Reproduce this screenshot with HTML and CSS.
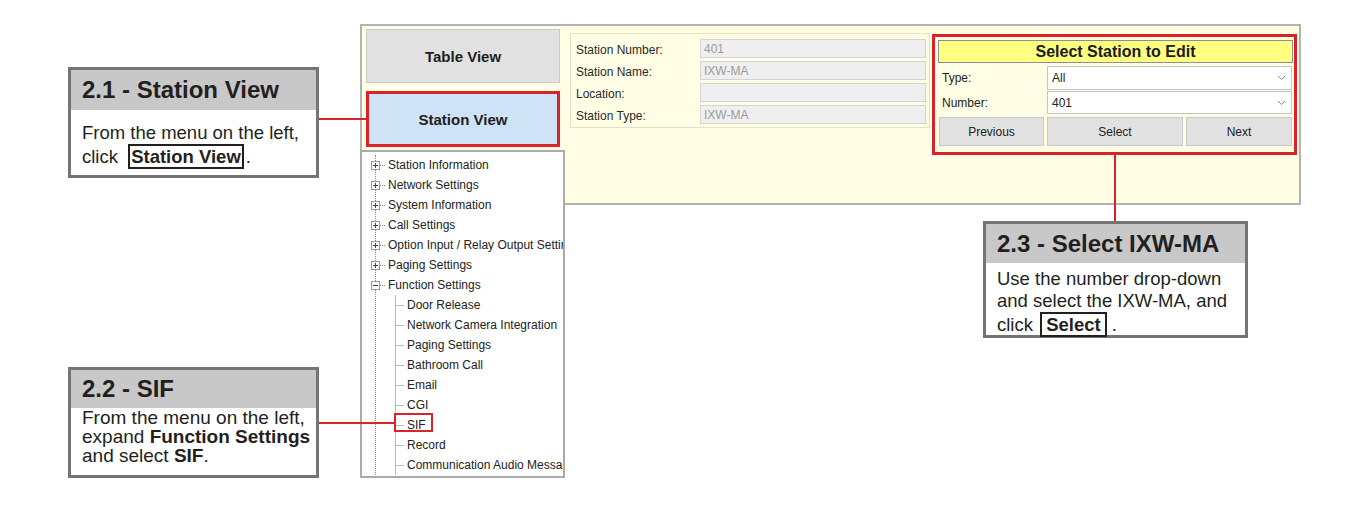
FILE: index.html
```html
<!DOCTYPE html>
<html lang="en">
<head>
<meta charset="utf-8">
<title>Station View - SIF</title>
<link rel="stylesheet" href="styles.css">
</head>
<body>
<div class="canvas">
  <div class="screen">
    <div class="leftcol">
      <div class="btnarea">
        <div class="viewbtn">Table View</div>
        <div class="viewbtn active">Station View</div>
      </div>
      <div class="tree">
        <ul class="tree-root">
          <li><div class="row"><svg class="exp" width="9" height="9" viewBox="0 0 9 9"><rect x="0.5" y="0.5" width="8" height="8" fill="#fff" stroke="#9a9a9a"/><path d="M2 4.5h5M4.5 2v5" stroke="#444"/></svg><span class="hdots"></span><span class="lbl">Station Information</span></div></li>
          <li><div class="row"><svg class="exp" width="9" height="9" viewBox="0 0 9 9"><rect x="0.5" y="0.5" width="8" height="8" fill="#fff" stroke="#9a9a9a"/><path d="M2 4.5h5M4.5 2v5" stroke="#444"/></svg><span class="hdots"></span><span class="lbl">Network Settings</span></div></li>
          <li><div class="row"><svg class="exp" width="9" height="9" viewBox="0 0 9 9"><rect x="0.5" y="0.5" width="8" height="8" fill="#fff" stroke="#9a9a9a"/><path d="M2 4.5h5M4.5 2v5" stroke="#444"/></svg><span class="hdots"></span><span class="lbl">System Information</span></div></li>
          <li><div class="row"><svg class="exp" width="9" height="9" viewBox="0 0 9 9"><rect x="0.5" y="0.5" width="8" height="8" fill="#fff" stroke="#9a9a9a"/><path d="M2 4.5h5M4.5 2v5" stroke="#444"/></svg><span class="hdots"></span><span class="lbl">Call Settings</span></div></li>
          <li><div class="row"><svg class="exp" width="9" height="9" viewBox="0 0 9 9"><rect x="0.5" y="0.5" width="8" height="8" fill="#fff" stroke="#9a9a9a"/><path d="M2 4.5h5M4.5 2v5" stroke="#444"/></svg><span class="hdots"></span><span class="lbl">Option Input / Relay Output Settings</span></div></li>
          <li><div class="row"><svg class="exp" width="9" height="9" viewBox="0 0 9 9"><rect x="0.5" y="0.5" width="8" height="8" fill="#fff" stroke="#9a9a9a"/><path d="M2 4.5h5M4.5 2v5" stroke="#444"/></svg><span class="hdots"></span><span class="lbl">Paging Settings</span></div></li>
          <li>
            <div class="row"><svg class="exp" width="9" height="9" viewBox="0 0 9 9"><rect x="0.5" y="0.5" width="8" height="8" fill="#fff" stroke="#9a9a9a"/><path d="M2 4.5h5" stroke="#444"/></svg><span class="hdots"></span><span class="lbl">Function Settings</span></div>
            <ul class="children">
              <li><div class="row"><span class="branch"></span><span class="lbl">Door Release</span></div></li>
              <li><div class="row"><span class="branch"></span><span class="lbl">Network Camera Integration</span></div></li>
              <li><div class="row"><span class="branch"></span><span class="lbl">Paging Settings</span></div></li>
              <li><div class="row"><span class="branch"></span><span class="lbl">Bathroom Call</span></div></li>
              <li><div class="row"><span class="branch"></span><span class="lbl">Email</span></div></li>
              <li><div class="row"><span class="branch"></span><span class="lbl">CGI</span></div></li>
              <li class="marked"><div class="row"><span class="branch"></span><span class="lbl">SIF</span></div><span class="mark"></span></li>
              <li><div class="row"><span class="branch"></span><span class="lbl">Record</span></div></li>
              <li><div class="row"><span class="branch"></span><span class="lbl">Communication Audio Messages</span></div></li>
            </ul>
          </li>
        </ul>
      </div>
    </div>

    <div class="panel">
      <div class="fields">
        <div class="flabel">Station Number:</div><div class="finput">401</div>
        <div class="flabel">Station Name:</div><div class="finput">IXW-MA</div>
        <div class="flabel">Location:</div><div class="finput"></div>
        <div class="flabel">Station Type:</div><div class="finput">IXW-MA</div>
      </div>

      <div class="select-panel">
        <div class="sp-head">Select Station to Edit</div>
        <div class="sp-row first">
          <div class="sp-label">Type:</div>
          <div class="sp-select"><span>All</span><svg width="9" height="6" viewBox="0 0 9 6"><path d="M1 1l3.5 3.5L8 1" fill="none" stroke="#8a8a8a"/></svg></div>
        </div>
        <div class="sp-row second">
          <div class="sp-label">Number:</div>
          <div class="sp-select"><span>401</span><svg width="9" height="6" viewBox="0 0 9 6"><path d="M1 1l3.5 3.5L8 1" fill="none" stroke="#8a8a8a"/></svg></div>
        </div>
        <div class="sp-buttons">
          <div class="sp-btn">Previous</div>
          <div class="sp-btn">Select</div>
          <div class="sp-btn">Next</div>
        </div>
      </div>
    </div>
  </div>

  <div class="callout c1">
    <div class="callout-head">2.1 - Station View</div>
    <div class="callout-body">From the menu on the left,<br>click <span class="key">Station View</span><span class="after">.</span></div>
  </div>

  <div class="callout c2">
    <div class="callout-head">2.2 - SIF</div>
    <div class="callout-body">From the menu on the left,<br>expand <b>Function Settings</b><br>and select <b>SIF</b>.</div>
  </div>

  <div class="callout c3">
    <div class="callout-head">2.3 - Select IXW-MA</div>
    <div class="callout-body">Use the number drop-down<br>and select the IXW-MA, and<br>click <span class="key narrow">Select</span> .</div>
  </div>

  <span class="link l1"></span>
  <span class="link l2"></span>
  <span class="link l3"></span>
</div>
</body>
</html>
```

FILE: styles.css
```css
* { box-sizing: border-box; }

html, body {
  margin: 0;
  padding: 0;
  background: #ffffff;
}

body {
  font-family: "Liberation Sans", Arial, sans-serif;
  color: #222222;
  width: 1367px;
  height: 506px;
  overflow: hidden;
}

.canvas {
  position: relative;
  width: 1367px;
  height: 506px;
  padding: 24px 0 0 360px;
}

/* ---------- screenshot of the web UI ---------- */
.screen {
  display: flex;
  align-items: flex-start;
}

.leftcol {
  width: 205px;
  display: flex;
  flex-direction: column;
}

.btnarea {
  background: #fffde4;
  border-top: 2px solid #b3b3b3;
  border-left: 2px solid #b3b3b3;
  padding: 3px 5px 3px 4px;
  display: flex;
  flex-direction: column;
  gap: 8px;
}

.viewbtn {
  height: 54px;
  background: #e1e1e1;
  border: 1px solid #cbcbcb;
  display: flex;
  align-items: center;
  justify-content: center;
  font-weight: bold;
  font-size: 15px;
  color: #1e1e1e;
}

.viewbtn.active {
  height: 56px;
  background: #cfe3f6;
  border: 3px solid #d9232b;
}

.tree {
  height: 328px;
  background: #ffffff;
  border: 2px solid #ababab;
  overflow: hidden;
  font-size: 12px;
  color: #222222;
}

.tree ul {
  list-style: none;
  margin: 0;
  padding: 0;
}

.tree-root {
  margin: 3px 0 0 13px !important;
  border-left: 1px dotted #8a8a8a;
}

.row {
  display: flex;
  align-items: center;
  height: 20px;
  white-space: nowrap;
}

.exp {
  flex: none;
  margin-left: -5px;
  display: block;
}

.hdots {
  flex: none;
  width: 5px;
  border-top: 1px dotted #8a8a8a;
}

.lbl {
  margin-left: 3px;
}

.children {
  margin-left: 19px !important;
  border-left: 1px solid #bdbdbd;
}

.branch {
  flex: none;
  width: 8px;
  border-top: 1px solid #bdbdbd;
}

.marked {
  position: relative;
}

.mark {
  position: absolute;
  left: -2px;
  top: -2px;
  width: 39px;
  height: 19px;
  border: 2px solid #d9232b;
}

/* right cream panel */
.panel {
  width: 736px;
  height: 181px;
  background: #fffde4;
  border: 2px solid #b3b3b3;
  border-left: none;
  padding: 7px 0 0 5px;
  display: flex;
  align-items: flex-start;
  gap: 2px;
}

.fields {
  width: 360px;
  height: 95px;
  border: 1px solid #e4e2c4;
  padding: 5px 3px 3px 5px;
  display: grid;
  grid-template-columns: 124px 226px;
  grid-auto-rows: 19px;
  row-gap: 3px;
  font-size: 12px;
}

.flabel {
  display: flex;
  align-items: center;
  padding-top: 3px;
  color: #2a2a2a;
}

.finput {
  background: #efefef;
  border: 1px solid #d3d3d3;
  color: #9b9b9b;
  padding-left: 3px;
  display: flex;
  align-items: center;
}

.select-panel {
  margin-top: 1px;
  width: 365px;
  border: 3px solid #d9232b;
  padding: 3px 1px 6px 3px;
  font-size: 12px;
}

.sp-head {
  height: 23px;
  background: #ffff80;
  border: 1px solid #8f8f8f;
  display: flex;
  align-items: center;
  justify-content: center;
  font-weight: bold;
  font-size: 16px;
  color: #1a1a1a;
}

.sp-row {
  display: grid;
  grid-template-columns: 105px 245px;
  column-gap: 3px;
  margin-left: 1px;
}

.sp-row.first {
  margin-top: 3px;
  height: 24px;
}

.sp-row.second {
  margin-top: 1px;
  height: 23px;
}

.sp-label {
  display: flex;
  align-items: center;
  padding-left: 3px;
  color: #222222;
}

.sp-select {
  background: #ffffff;
  border: 1px solid #c4c4c4;
  display: flex;
  align-items: center;
  justify-content: space-between;
  padding: 0 5px 0 4px;
  color: #222222;
}

.sp-buttons {
  margin: 3px 0 0 1px;
  display: grid;
  grid-template-columns: 105px 136px 106px;
  column-gap: 3px;
  height: 29px;
}

.sp-btn {
  background: #e1e1e1;
  border: 1px solid #c9c9c9;
  display: flex;
  align-items: center;
  justify-content: center;
  color: #222222;
}

/* ---------- annotation callouts ---------- */
.callout {
  position: absolute;
  background: #ffffff;
  border: 3px solid #747474;
  color: #231f20;
}

.callout-head {
  background: #c8c8c8;
  font-weight: bold;
  font-size: 24px;
  padding-left: 11px;
  display: flex;
  align-items: center;
}

.callout-body {
  font-size: 18.5px;
  padding-left: 11px;
  white-space: nowrap;
}

.callout-body b {
  font-weight: bold;
}

.key {
  display: inline-block;
  border: 2px solid #231f20;
  font-weight: bold;
  line-height: 21px;
  padding: 0 1px;
  margin-left: 5px;
}

.key.narrow {
  padding: 0 4px;
  margin-left: 2px;
}

.after {
  margin-left: 2px;
}

.c1 {
  left: 68px;
  top: 67px;
  width: 251px;
  height: 111px;
}

.c1 .callout-head { height: 40px; }
.c1 .callout-body { line-height: 22px; padding-top: 12px; }

.c2 {
  left: 68px;
  top: 367px;
  width: 251px;
  height: 111px;
}

.c2 .callout-head { height: 38px; }
.c2 .callout-body { line-height: 19px; padding-top: 0; font-size: 19px; }

.c3 {
  left: 983px;
  top: 221px;
  width: 265px;
  height: 117px;
}

.c3 .callout-head { height: 39px; }
.c3 .callout-body { line-height: 22px; padding-top: 5px; }

/* red connector lines */
.link {
  position: absolute;
  background: #d9232b;
}

.l1 { left: 319px; top: 118px; width: 47px; height: 2px; }
.l2 { left: 319px; top: 422px; width: 75px; height: 2px; }
.l3 { left: 1114px; top: 155px; width: 2px; height: 66px; }
```
